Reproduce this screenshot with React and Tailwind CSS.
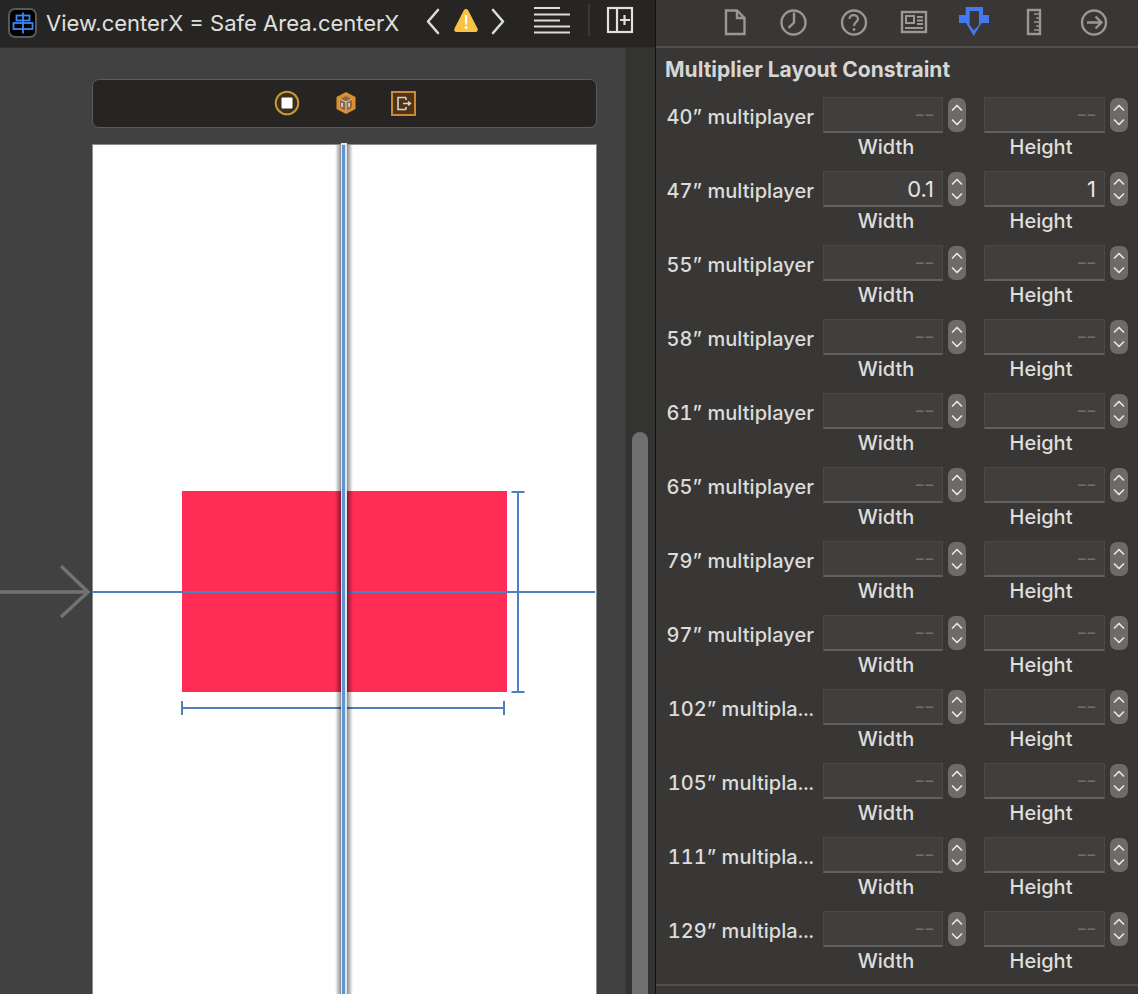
import React from "react";

const font = { fontFamily: "Inter, 'Noto Sans', sans-serif" };

const rows = [
  ["40” multiplayer"], ["47” multiplayer", "0.1", "1"], ["55” multiplayer"], ["58” multiplayer"],
  ["61” multiplayer"], ["65” multiplayer"], ["79” multiplayer"], ["97” multiplayer"],
  ["102” multipla..."], ["105” multipla..."], ["111” multipla..."], ["129” multipla..."],
];

function Stepper() {
  return (
    <div className="w-[18px] h-[34px] rounded-[7px] bg-[#6c6b6a] mt-px">
      <svg width="18" height="34" viewBox="0 0 18 34" fill="none" stroke="#e6e6e6" strokeWidth="1.7" strokeLinecap="round" strokeLinejoin="round">
        <path d="M4.5 12 L9 7.5 L13.5 12" />
        <path d="M4.5 22 L9 26.5 L13.5 22" />
      </svg>
    </div>
  );
}

function Field({ value, label, w, labelClass }) {
  return (
    <div className="flex flex-col items-center">
      <div className={`${w} h-[36px] bg-[#403f3e] border-t border-x border-[#4a4948] border-b-2 border-b-[#62615f] flex items-center justify-end pr-[7px]`}>
        {value ? (
          <span className="text-[22px] leading-none text-[#e4e4e3] mr-[1px] mt-[1px]">{value}</span>
        ) : (
          <span className="text-[15px] leading-none text-[#6f6e6d] font-semibold tracking-[2px]">––</span>
        )}
      </div>
      <span className={`${labelClass} text-[20px] leading-[24px] font-[450] text-[#dededd] mt-[2px]`}>{label}</span>
    </div>
  );
}

function Row({ name, w, h }) {
  return (
    <div className="flex h-[74px] items-start">
      <div className="w-[167px] pr-[9px] h-[36px] pt-[4px] flex items-center justify-end whitespace-nowrap text-[20px] font-[450] tabular-nums tracking-[0.05px] text-[#dcdcdb]">{name}</div>
      <Field value={w} label="Width" w="w-[120px]" labelClass="ml-[6px]" />
      <div className="w-[5px]" />
      <Stepper />
      <div className="w-[18px]" />
      <Field value={h} label="Height" w="w-[121px]" labelClass="mr-[7px]" />
      <div className="w-[5px]" />
      <Stepper />
    </div>
  );
}

function InspectorIcons() {
  const g = "#999896";
  return (
    <div className="h-[46px] flex items-center relative">
      <svg width="482" height="46" viewBox="0 0 482 46" fill="none" stroke={g} strokeWidth="2.4">
        <path d="M70 10.5 H81 L88.5 18 V34 H70 Z M81 10.5 V18 H88.5" />
        <circle cx="137.5" cy="22.5" r="12" />
        <path d="M138 12.5 V22.5 L132.5 28" />
        <circle cx="198" cy="22.5" r="12" />
        <path d="M193.5 19 C193.5 13.5 202 14 202 19 C202 22 198 22 198 26" strokeWidth="2.2" />
        <circle cx="198" cy="29.5" r="1" fill={g} strokeWidth="1" />
        <rect x="246" y="12" width="24" height="20" />
        <rect x="250" y="16" width="8" height="7" strokeWidth="2" />
        <path d="M261 17 H267 M261 20.5 H267 M261 24 H267 M249 28 H267" strokeWidth="2" />
        <path fillRule="evenodd" d="M309.7 7 H327 V15 H333 V23 H325.5 L317.7 36 L310 23 H303 V15 H309.7 Z M313.7 11 V25 L317.7 30.5 L323 25 V11 Z" fill="#4478f0" stroke="none" />
        <rect x="372" y="10" width="12" height="24" />
        <path d="M378 14 H383 M380 18 H383 M378 22 H383 M380 26 H383 M378 30 H383" strokeWidth="1.6" />
        <circle cx="438" cy="22.5" r="12" />
        <path d="M431 22.5 H445 M439.5 16.5 L445.5 22.5 L439.5 28.5" />
      </svg>
    </div>
  );
}

function Toolbar() {
  return (
    <div className="h-[48px] bg-[#262524] flex items-center shrink-0 relative border-b border-[#2f2e2d]">
      <div className="ml-[8px] w-[29px] h-[30px] rounded-[7px] bg-black border-2 border-[#56595e] mb-[1px] flex items-center justify-center">
        <svg width="24" height="24" viewBox="0 0 24 24" fill="none" stroke="#3b87f5" strokeWidth="1.8">
          <path d="M12 1.5 V22.5" />
          <rect x="5.5" y="4.5" width="13" height="5" />
          <rect x="2.5" y="12" width="19" height="6" />
        </svg>
      </div>
      <span className="ml-[9px] text-[22px] leading-none whitespace-nowrap text-[#e0e0df] mb-[2px]">View.centerX = Safe Area.centerX</span>
      <svg className="absolute left-[425px] top-[7px]" width="20" height="28" viewBox="0 0 20 28" fill="none" stroke="#dcdcdb" strokeWidth="2.6" strokeLinecap="round" strokeLinejoin="round">
        <path d="M13 3 L3 14.5 L13 26" />
      </svg>
      <svg className="absolute left-[453px] top-[7px]" width="26" height="26" viewBox="0 0 26 26">
        <path d="M13 2 C14 2 14.8 2.6 15.3 3.6 L24.5 21.5 C25.3 23.2 24.4 25 22.5 25 H3.5 C1.6 25 .7 23.2 1.5 21.5 L10.7 3.6 C11.2 2.6 12 2 13 2 Z" fill="#fbc343" />
        <path d="M11.7 8 H14.3 L13.8 17.5 H12.2 Z" fill="#fff" />
        <circle cx="13" cy="20.5" r="1.6" fill="#fff" />
      </svg>
      <svg className="absolute left-[488px] top-[7px]" width="20" height="28" viewBox="0 0 20 28" fill="none" stroke="#dcdcdb" strokeWidth="2.6" strokeLinecap="round" strokeLinejoin="round">
        <path d="M5 3 L15 14.5 L5 26" />
      </svg>
      <svg className="absolute left-[534px] top-[6px]" width="38" height="28" viewBox="0 0 38 28" stroke="#dedddc" strokeWidth="2.2">
        <path d="M0 2 H26 M0 8.5 H36 M0 14.5 H26 M0 20.5 H36 M0 26.5 H36" />
      </svg>
      <div className="absolute left-[588px] top-[4px] w-[2px] h-[32px] bg-[#3a3938]" />
      <svg className="absolute left-[606px] top-[6px]" width="28" height="28" viewBox="0 0 28 28" fill="none" stroke="#e2e1e0" strokeWidth="2.2">
        <rect x="2" y="2" width="24" height="24" />
        <path d="M11 2 V26" />
        <path d="M14 14 H24 M18.5 9 V19" />
      </svg>
    </div>
  );
}

function Canvas() {
  return (
    <div className="relative flex-1 bg-[#414141] overflow-hidden">
      {/* scene dock */}
      <div className="absolute left-[92px] top-[31px] w-[505px] h-[49px] rounded-[7px] bg-[#262524] border border-[#5b5b5b] flex items-center">
        <svg className="absolute left-[181px] top-[10px]" width="26" height="26" viewBox="0 0 26 26">
          <circle cx="13" cy="13" r="11.3" fill="#383020" stroke="#c9992f" strokeWidth="2" />
          <rect x="7.5" y="7.5" width="11" height="11" rx="1" fill="#fff" />
        </svg>
        <svg className="absolute left-[240px] top-[10px]" width="26" height="26" viewBox="0 0 26 26">
          <path d="M13 2 L22.5 7 V19 L13 24 L3.5 19 V7 Z" fill="#de8f2e" />
          <path d="M13 6 L19 9 V17.5 L13 21 L7 17.5 V9 Z" fill="#8b6a45" />
          <path d="M7 9 L13 12 L19 9 M13 12 V21" fill="none" stroke="#d9cfc0" strokeWidth="1" />
          <path d="M9 13 V17 M16 13 V17" stroke="#efe8dd" strokeWidth="1.4" />
        </svg>
        <svg className="absolute left-[298px] top-[11px]" width="25" height="25" viewBox="0 0 25 25">
          <rect x="1" y="1" width="23" height="23" fill="#4e3418" stroke="#cb8a30" strokeWidth="2" />
          <path d="M15 6.5 H7 V18.5 H15 M15 6.5 V9 M15 16 V18.5" fill="none" stroke="#dcd3c6" strokeWidth="1.6" />
          <path d="M12 12.5 H19 M17 10.5 L19.5 12.5 L17 14.5" fill="none" stroke="#dcd3c6" strokeWidth="1.5" />
        </svg>
      </div>

      {/* view */}
      <div className="absolute left-[92px] top-[96px] w-[505px] h-[900px] bg-white border-l border-t border-r border-[#8c8c8c]" />

      {/* red rectangle */}
      <div className="absolute left-[182px] top-[443px] w-[325px] h-[201px] bg-[#ff2d55]" />

      {/* horizontal centre guide */}
      <div className="absolute left-[92px] top-[543px] w-[503px] h-[2px] bg-[#4f80bd]" />

      {/* height constraint */}
      <svg className="absolute left-[508px] top-[442px]" width="20" height="204" viewBox="0 0 20 204" fill="none" stroke="#4f80bd" strokeWidth="2">
        <path d="M10 2 V202 M3.5 2 H16.5 M3.5 202 H16.5" />
      </svg>
      {/* width constraint */}
      <svg className="absolute left-[180px] top-[652px]" width="328" height="16" viewBox="0 0 328 16" fill="none" stroke="#4f80bd" strokeWidth="2">
        <path d="M2 1 V15 M2 8 H324 M324 1 V15" />
      </svg>

      {/* vertical centre guide */}
      <div className="absolute left-[335px] top-[97px] w-[6px] h-[900px] bg-gradient-to-r from-black/0 to-black/45" />
      <div className="absolute left-[347px] top-[97px] w-[6px] h-[900px] bg-gradient-to-l from-black/0 to-black/45" />
      <div className="absolute left-[341px] top-[95px] w-[6px] h-[900px] bg-[#e2e5ea]" />
      <div className="absolute left-[342px] top-[97px] w-[3px] h-[900px] bg-[#5f93d2]" />

      {/* entry arrow */}
      <svg className="absolute left-0 top-[515px]" width="92" height="56" viewBox="0 0 92 56" fill="none" stroke="#727272" strokeWidth="3.5">
        <path d="M0 29 H88" />
        <path d="M61 3 L88 29 L61 54" strokeWidth="3.5" />
      </svg>

      {/* scroller */}
      <div className="absolute right-0 top-0 bottom-0 w-[30px] bg-[#333332] border-l border-[#3a3a3a]">
        <div className="absolute left-[6px] top-[384px] w-[16px] h-[600px] rounded-t-[8px] bg-[#6f6f6f]" />
      </div>
    </div>
  );
}

export default function App() {
  return (
    <div className="w-[1138px] h-[994px] flex overflow-hidden" style={font}>
      <div className="w-[655px] h-full flex flex-col shrink-0 border-r-0">
        <Toolbar />
        <Canvas />
      </div>
      <div className="w-px bg-[#111] h-full" />
      <div className="flex-1 h-full bg-[#383735] flex flex-col overflow-hidden">
        <InspectorIcons />
        <div className="h-[2px] bg-[#504f4e]" />
        <div className="pl-[9px] pt-[10px] h-[49px] text-[21px] leading-[24px] font-bold text-[#d6d6d5] whitespace-nowrap">Multiplier Layout Constraint</div>
        <div className="flex flex-col">
          {rows.map((r) => (
            <Row key={r[0]} name={r[0]} w={r[1]} h={r[2]} />
          ))}
        </div>
        <div className="h-[2px] bg-[#504f4e] -mt-[1px]" />
      </div>
    </div>
  );
}
